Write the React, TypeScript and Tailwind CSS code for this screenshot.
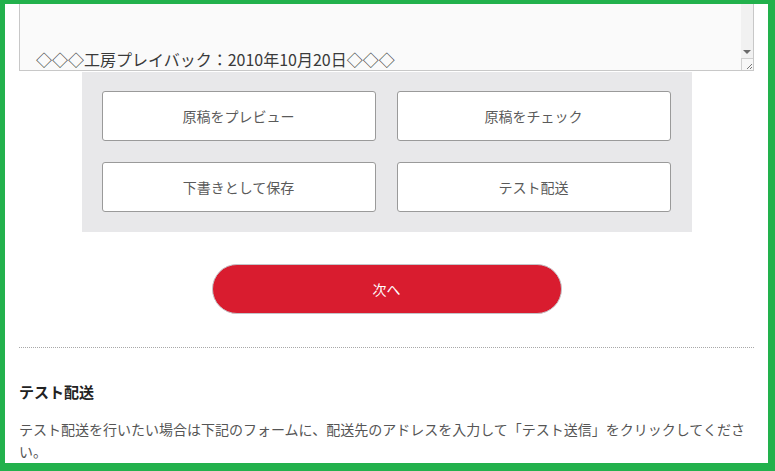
const font = { fontFamily: '"Noto Sans CJK JP", "Noto Sans", sans-serif' }

function ActionButton({ label }: { label: string }) {
  return (
    <button className="h-[50px] w-full rounded-[3px] border border-[#9a9a9a] bg-white text-[14px] leading-none text-[#5a5a5a]">
      {label}
    </button>
  )
}

export default function App() {
  return (
    <div
      style={font}
      className="h-[471px] w-[775px] overflow-hidden border-t-[4px] border-r-[7px] border-b-[8px] border-l-[5px] border-[#22b14c] bg-white"
    >
      <div className="flex flex-col px-[14px]">
        {/* textarea (scrolled, top cut off) */}
        <div className="relative flex h-[67px] items-end border-x border-b border-[#c8c8c8] bg-[#fafafa] pb-[1px] pl-[16px]">
          <span className="text-[16px] leading-[20px] text-[#3a3a3a]">
            ◇◇◇工房プレイバック：2010年10月20日◇◇◇
          </span>
          <div className="absolute top-0 right-0 flex h-full w-[12px] flex-col bg-[#f1f1f1]">
            <div className="flex flex-1 items-end justify-center pb-[4px]">
              <div className="h-0 w-0 border-x-[4px] border-t-[4px] border-x-transparent border-t-[#6a6a6a]" />
            </div>
            <div className="flex h-[12px] items-end justify-end border-t border-l border-[#d0d0d0] bg-[#f7f7f7]">
              <svg width="8" height="8" viewBox="0 0 8 8">
                <path d="M7 2 L2 7 M7 5 L5 7" stroke="#777" strokeWidth="1" />
              </svg>
            </div>
          </div>
        </div>

        <div className="mx-auto mt-[1px] grid w-[610px] grid-cols-2 gap-x-[21px] gap-y-[21px] bg-[#e8e8ea] pt-[19px] pr-[21px] pb-[20px] pl-[20px]">
          <ActionButton label="原稿をプレビュー" />
          <ActionButton label="原稿をチェック" />
          <ActionButton label="下書きとして保存" />
          <ActionButton label="テスト配送" />
        </div>

        <button className="mx-auto mt-[32px] h-[50px] w-[350px] rounded-full border border-[#c4c4c8] bg-[#d91c2f] text-[14px] leading-none text-white">
          次へ
        </button>

        <div className="mt-[33px] border-t border-dotted border-[#a8a8a8]" />

        <h3 className="mt-[33px] text-[15px] leading-[22px] font-bold text-[#222]">テスト配送</h3>
        <p className="mt-[15px] text-[14px] leading-[22px] text-[#555]">
          テスト配送を行いたい場合は下記のフォームに、配送先のアドレスを入力して「テスト送信」をクリックしてください。
        </p>
      </div>
    </div>
  )
}
